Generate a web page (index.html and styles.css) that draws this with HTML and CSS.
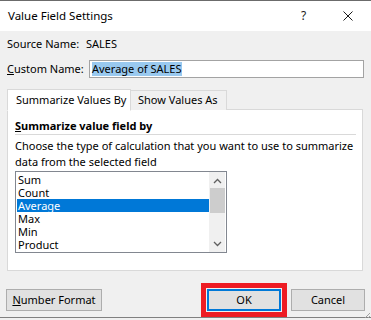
FILE: index.html
```html
<!DOCTYPE html>
<html>
<head>
<meta charset="utf-8">
<link rel="stylesheet" href="styles.css">
</head>
<body>
<div class="dialog">
  <div class="titlebar">
    <span class="title">Value Field Settings</span>
    <span class="help">?</span>
    <svg class="close" width="10" height="10" viewBox="0 0 10 10"><path d="M0.5 0.5 L9.5 9.5 M9.5 0.5 L0.5 9.5" stroke="#1a1a1a" stroke-width="1" fill="none"/></svg>
  </div>
  <div class="content">
    <div class="row source">
      <span class="label">Source Name:</span>
      <span class="value">SALES</span>
    </div>
    <div class="row custom">
      <span class="label"><u>C</u>ustom Name:</span>
      <div class="input"><span class="sel">Average of SALES</span></div>
    </div>
    <div class="tabs">
      <div class="tab active">Summarize Values By</div>
      <div class="tab">Show Values As</div>
    </div>
    <div class="panel">
      <div class="heading"><u>S</u>ummarize value field by</div>
      <div class="desc">Choose the type of calculation that you want to use to summarize<br>data from the selected field</div>
      <div class="listbox">
        <ul class="items">
          <li>Sum</li>
          <li>Count</li>
          <li class="selected">Average</li>
          <li>Max</li>
          <li>Min</li>
          <li>Product</li>
        </ul>
        <div class="scrollbar">
          <svg class="arrow" width="9" height="6" viewBox="0 0 9 6"><path d="M1 5 L4.5 1.5 L8 5" stroke="#606060" stroke-width="1.3" fill="none"/></svg>
          <div class="thumb"></div>
          <div class="track"></div>
          <svg class="arrow" width="9" height="6" viewBox="0 0 9 6"><path d="M1 1 L4.5 4.5 L8 1" stroke="#606060" stroke-width="1.3" fill="none"/></svg>
        </div>
      </div>
    </div>
    <div class="buttons">
      <button class="btn numfmt"><u>N</u>umber Format</button>
      <div class="spacer"></div>
      <button class="btn ok">OK</button>
      <button class="btn cancel">Cancel</button>
    </div>
  </div>
  <div class="bottomedge">
    <svg class="grip" width="7" height="7" viewBox="0 0 7 7"><path d="M6 1 L1 6 M6 4 L4 6" stroke="#a0a0a0" stroke-width="1" fill="none"/></svg>
  </div>
</div>
</body>
</html>
```

FILE: styles.css
```css
* { box-sizing: border-box; }
html, body {
  margin: 0;
  padding: 0;
  width: 371px;
  height: 320px;
  overflow: hidden;
  background: #f0f0f0;
}
body {
  font-family: "Noto Sans", sans-serif;
  font-size: 11px;
  color: #000;
  white-space: nowrap;
}
u { text-decoration: underline; text-underline-offset: 1px; }
.dialog {
  display: flex;
  flex-direction: column;
  height: 320px;
}
.titlebar {
  height: 31px;
  background: #fff;
  border-top: 1px solid #6b6b6b;
  display: flex;
  align-items: center;
  padding-left: 8px;
}
.title { flex: 1; line-height: 16px; font-size: 11.5px; }
.help { width: 6px; margin-right: 36px; line-height: 16px; color: #1a1a1a; font-size: 12px; }
.close { margin-right: 18px; }
.content {
  flex: 1;
  padding: 5px 7px 0 7px;
  display: flex;
  flex-direction: column;
}
.row { display: flex; align-items: center; line-height: 16px; }
.label { flex-shrink: 0; }
.source .label { width: 79px; }
.custom { margin-top: 8px; }
.custom .label { width: 82px; }
.input {
  flex: 1;
  height: 18px;
  background: #fff;
  border: 1px solid #a3a3a3;
  padding: 1px 2px;
  line-height: 14px;
}
.sel { background: #99c9ef; padding: 0 1px 0 0; display: inline-block; height: 14px; }
.tabs {
  margin-top: 10px;
  display: flex;
  align-items: flex-end;
  height: 22px;
  position: relative;
  z-index: 1;
}
.tab {
  height: 20px;
  padding: 0 7px;
  line-height: 18px;
  background: #f0f0f0;
  border: 1px solid #d9d9d9;
  border-bottom: none;
  flex-shrink: 0;
}
.tab.active {
  height: 22px;
  width: 124px;
  padding: 0 8px;
  line-height: 20px;
  background: #fff;
  border-bottom: 1px solid #fff;
  margin-bottom: -1px;
}
.tab:not(.active) { width: 96px; padding-left: 7px; border-left: none; }
.panel {
  width: 356px;
  height: 162px;
  background: #fff;
  border: 1px solid #d9d9d9;
  margin-top: -1px;
  padding: 8px 6px 0 7px;
}
.heading {
  font-weight: bold;
  line-height: 16px;
  border-bottom: 1px solid #d9d9d9;
}
.desc { line-height: 16px; margin-top: 3px; }
.listbox {
  margin-top: 1px;
  width: 212px;
  height: 82px;
  border: 1px solid #828790;
  display: flex;
  padding: 1px;
}
.items {
  list-style: none;
  margin: 0;
  padding: 0;
  flex: 1;
}
.items li {
  height: 13px;
  line-height: 13px;
  padding-left: 1px;
}
.items li.selected { background: #0078d7; color: #fff; }
.scrollbar {
  width: 16px;
  background: #f0f0f0;
  display: flex;
  flex-direction: column;
  align-items: center;
  margin-top: -1px;
  margin-bottom: -1px;
  padding-top: 6px;
  padding-bottom: 5px;
}
.thumb { width: 15px; height: 25px; background: #cdcdcd; margin-top: 4px; }
.track { flex: 1; }
.buttons {
  display: flex;
  margin-top: 18px;
  margin-left: -1px;
  align-items: center;
}
.spacer { flex: 1; }
.btn {
  font-family: inherit;
  font-size: 11px;
  height: 22px;
  background: #e1e1e1;
  border: 1px solid #adadad;
  color: #000;
  padding: 0;
  line-height: 18px;
}
.numfmt { width: 96px; }
.ok {
  width: 74px;
  border: 2px solid #0078d7;
  outline: 5px solid #ed1c24;
  outline-offset: 1px;
  margin-right: 10px;
}
.cancel { width: 74px; margin-right: -1px; }
.bottomedge {
  height: 3px;
  border-top: 1px solid #808080;
  position: relative;
}
.grip { position: absolute; right: 0; bottom: 1px; }
```
